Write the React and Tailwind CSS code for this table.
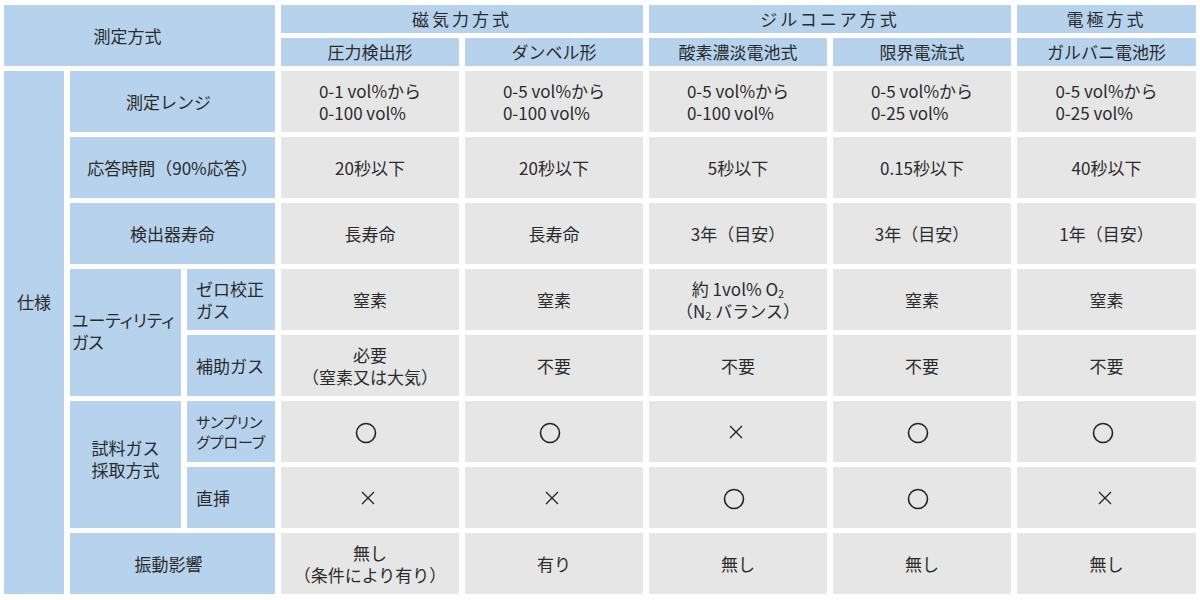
import React from "react";

const blue = "bg-[#b7d2ec]";
const gray = "bg-[#e6e6e6]";

const rows = [
  [
    <Range a="0-1 vol%から" b="0-100 vol%" />,
    <Range a="0-5 vol%から" b="0-100 vol%" />,
    <Range a="0-5 vol%から" b="0-100 vol%" />,
    <Range a="0-5 vol%から" b="0-25 vol%" />,
    <Range a="0-5 vol%から" b="0-25 vol%" />,
  ],
  ["20秒以下", "20秒以下", "5秒以下", "0.15秒以下", "40秒以下"],
  ["長寿命", "長寿命", "3年（目安）", "3年（目安）", "1年（目安）"],
  [
    "窒素",
    "窒素",
    <span>
      約 1vol% O<sub className="text-[11px]">2</sub>
      <br />
      （N<sub className="text-[11px]">2</sub> バランス）
    </span>,
    "窒素",
    "窒素",
  ],
  [
    <span>
      必要
      <br />
      （窒素又は大気）
    </span>,
    "不要",
    "不要",
    "不要",
    "不要",
  ],
  ["○", "○", "×", "○", "○"],
  ["×", "×", "○", "○", "×"],
  [
    <span>
      無し
      <br />
      （条件により有り）
    </span>,
    "有り",
    "無し",
    "無し",
    "無し",
  ],
];

function Range({ a, b }) {
  return (
    <span className="inline-block text-left">
      {a}
      <br />
      {b}
    </span>
  );
}

function Mark({ v }) {
  if (v === "○") {
    return (
      <svg width="22" height="22" viewBox="0 0 22 22" className="-ml-[8px] mt-[2px]">
        <circle cx="11" cy="11" r="9.5" fill="none" stroke="#222" strokeWidth="1.6" />
      </svg>
    );
  }
  return (
    <svg width="16" height="16" viewBox="0 0 16 16" className="-ml-[4px]">
      <path d="M2 2 L14 14 M14 2 L2 14" stroke="#222" strokeWidth="1.3" fill="none" />
    </svg>
  );
}

const App = () => {
  return (
    <div
      className="w-[1200px] h-[600px] bg-white pl-[4px] pt-[5px] text-[#2b2b2b] text-[17px] leading-[22px]"
      style={{ fontFamily: '"Noto Sans CJK JP", "Noto Sans", sans-serif' }}
    >
      <div className="grid grid-cols-[60px_111px_88px_178px_178px_178px_178px_179px] grid-rows-[28px_28px_repeat(8,61px)] gap-x-[6px] gap-y-[5px]">
        {/* HEADER */}
        <div className={`${blue} col-start-1 col-span-3 row-start-1 row-span-2 flex items-center justify-center pr-6`}>
          測定方式
        </div>
        <div className={`${blue} col-start-4 col-span-2 row-start-1 flex items-center justify-center tracking-[3px]`}>
          磁気力方式
        </div>
        <div className={`${blue} col-start-6 col-span-2 row-start-1 flex items-center justify-center tracking-[3px]`}>
          ジルコニア方式
        </div>
        <div className={`${blue} col-start-8 row-start-1 flex items-center justify-center tracking-[3px]`}>
          電極方式
        </div>
        <div className={`${blue} col-start-4 row-start-2 flex items-center justify-center`}>圧力検出形</div>
        <div className={`${blue} col-start-5 row-start-2 flex items-center justify-center`}>ダンベル形</div>
        <div className={`${blue} col-start-6 row-start-2 flex items-center justify-center`}>酸素濃淡電池式</div>
        <div className={`${blue} col-start-7 row-start-2 flex items-center justify-center`}>限界電流式</div>
        <div className={`${blue} col-start-8 row-start-2 flex items-center justify-center`}>ガルバニ電池形</div>

        {/* LABELS */}
        <div className={`${blue} col-start-1 row-start-3 row-span-8 flex justify-center pt-[220px]`}>仕様</div>
        <div className={`${blue} col-start-2 col-span-2 row-start-3 flex items-center justify-center pr-2`}>測定レンジ</div>
        <div className={`${blue} col-start-2 col-span-2 row-start-4 flex items-center justify-center`}>
          応答時間（90%応答）
        </div>
        <div className={`${blue} col-start-2 col-span-2 row-start-5 flex items-center justify-center`}>検出器寿命</div>
        <div className={`${blue} col-start-2 row-start-6 row-span-2 flex items-center pl-[2px] pb-[4px] [font-feature-settings:'palt']`}>
          <span>
            ユーティリティ
            <br />
            ガス
          </span>
        </div>
        <div className={`${blue} col-start-3 row-start-6 flex items-center pl-[9px]`}>
          <span>
            ゼロ校正
            <br />
            ガス
          </span>
        </div>
        <div className={`${blue} col-start-3 row-start-7 flex items-center pl-[9px]`}>補助ガス</div>
        <div className={`${blue} col-start-2 row-start-8 row-span-2 flex items-center justify-center pb-[12px]`}>
          <span>
            試料ガス
            <br />
            採取方式
          </span>
        </div>
        <div className={`${blue} col-start-3 row-start-8 flex items-center pl-[9px] text-[15px] leading-[20px] [font-feature-settings:'palt']`}>
          <span>
            サンプリン
            <br />
            グプローブ
          </span>
        </div>
        <div className={`${blue} col-start-3 row-start-9 flex items-center pl-[9px]`}>直挿</div>
        <div className={`${blue} col-start-2 col-span-2 row-start-10 flex items-center justify-center pr-2`}>振動影響</div>

        {/* DATA */}
        {rows.map((row, ri) =>
          row.map((cell, ci) => (
            <div key={`${ri}-${ci}`} className={`${gray} flex items-center justify-center text-center`}>
              {cell === "○" || cell === "×" ? <Mark v={cell} /> : cell}
            </div>
          ))
        )}
      </div>
    </div>
  );
};

export default App;
